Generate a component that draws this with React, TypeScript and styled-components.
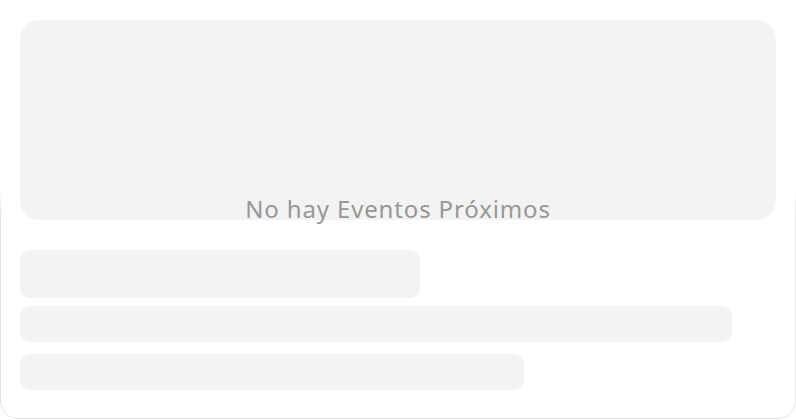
import React from "react";
import styled, { createGlobalStyle } from "styled-components";

const Global = createGlobalStyle`
  html, body { margin: 0; padding: 0; background: #ffffff; }
  body { font-family: "Noto Sans", "Liberation Sans", sans-serif; }
`;

const Card = styled.div`
  position: relative;
  box-sizing: border-box;
  width: 796px;
  height: 420px;
  padding: 20px;
  display: flex;
  flex-direction: column;
  &::before {
    content: "";
    position: absolute;
    inset: 0 0 1px 0;
    border: 1.5px solid #e3e3e3;
    border-radius: 18px;
    pointer-events: none;
    -webkit-mask-image: linear-gradient(to bottom, transparent 190px, #000 215px);
    mask-image: linear-gradient(to bottom, transparent 190px, #000 215px);
  }
`;

const Hero = styled.div`
  height: 200px;
  border-radius: 20px;
  background: #f3f3f3;
`;

const EmptyLabel = styled.div`
  position: absolute;
  left: 0;
  right: 0;
  top: 192px;
  text-align: center;
  font-family: "Noto Sans", sans-serif;
  font-size: 24px;
  font-weight: 400;
  letter-spacing: 0.85px;
  color: #979797;
`;

const Lines = styled.div`
  margin-top: 30px;
  display: flex;
  flex-direction: column;
  gap: 8px;
`;

const Bar = styled.div<{ $w: number; $h: number; $mt?: number }>`
  width: ${(p) => p.$w}px;
  height: ${(p) => p.$h}px;
  margin-top: ${(p) => p.$mt ?? 0}px;
  border-radius: 10px;
  background: #f3f3f3;
`;

export default function App() {
  return (
    <>
      <Global />
      <Card>
        <Hero />
        <Lines>
          <Bar $w={400} $h={48} />
          <Bar $w={712} $h={36} />
          <Bar $w={504} $h={36} $mt={4} />
        </Lines>
        <EmptyLabel>No hay Eventos Próximos</EmptyLabel>
      </Card>
    </>
  );
}
